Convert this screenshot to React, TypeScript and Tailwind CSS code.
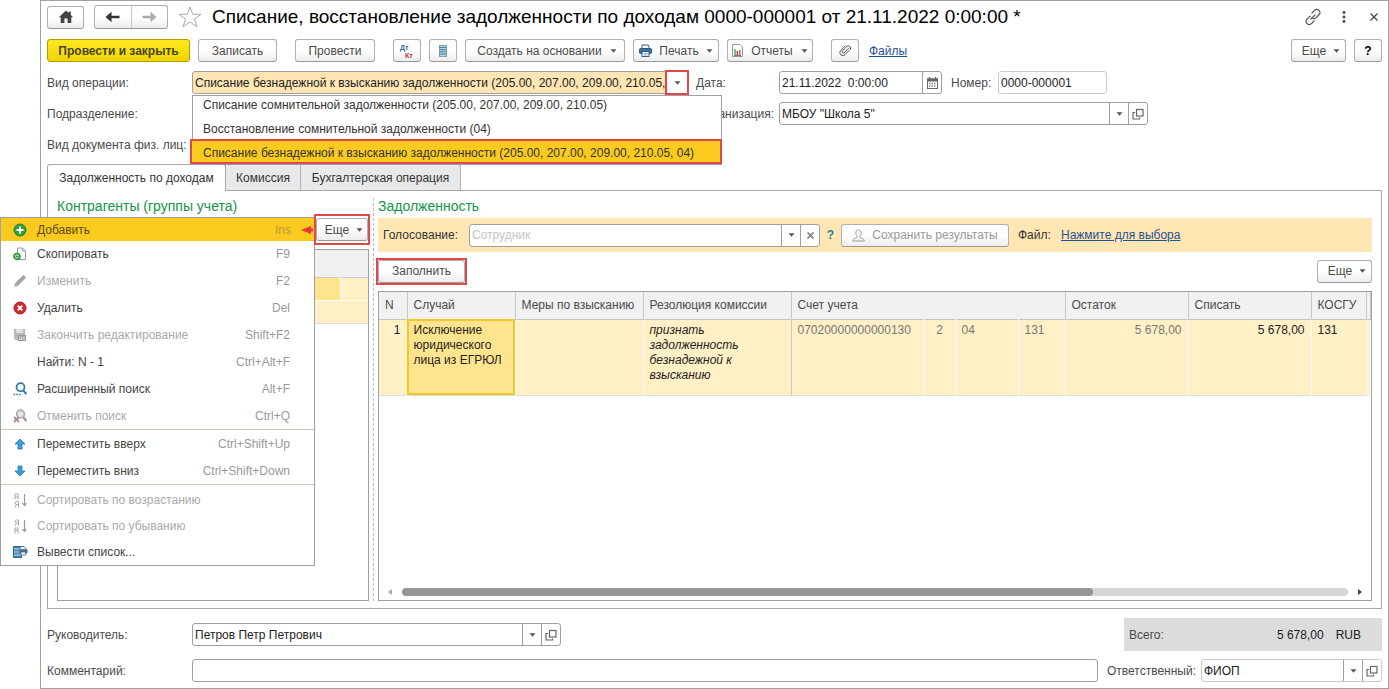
import { ReactNode } from "react";

interface MenuItem {
  label: string;
  keys?: string;
  icon?: ReactNode;
  disabled?: boolean;
}

const Caret = () => (
  <svg width="7" height="4" viewBox="0 0 7 4" className="shrink-0">
    <path d="M0.500 0.300h6L3.500 3.700z" fill="#555" />
  </svg>
);

const OpenIcon = () => (
  <svg width="12" height="12" viewBox="0 0 12 12" fill="none" stroke="#666">
    <rect x="4.500" y="1.500" width="6.500" height="6.500" strokeWidth="1.200" />
    <path d="M3 4.500H1v6.500h6.500V9.500" strokeWidth="1.200" />
  </svg>
);

const HomeIcon = () => (
  <svg width="16" height="14" viewBox="0 0 16 14">
    <path
      d="M8 0.500L0.800 7.300h1.900V13h3.700V8.500h3.200V13h3.700V7.300h1.900L12.800 4.900V1.500h-2v1.600z"
      fill="#444"
    />
  </svg>
);

const ArrowIcon = ({ flip, color }: { flip?: boolean; color: string }) => (
  <svg
    width="15"
    height="12"
    viewBox="0 0 15 12"
    className={flip ? "rotate-180" : ""}
  >
    <path d="M0.500 6L6.500 0.800V4.700H14.500v2.600H6.500v3.900z" fill={color} />
  </svg>
);

const StarIcon = () => (
  <svg width="24" height="22" viewBox="0 0 24 22">
    <path
      d="M12 1l2.700 7.300h8.300l-6.500 4.700 2.400 7.700L12 16l-6.900 4.700L7.500 13 1 8.300h8.300z"
      fill="#fff"
      stroke="#aaa"
    />
  </svg>
);

const LinkIcon = () => (
  <svg
    width="18"
    height="18"
    viewBox="0 0 18 18"
    fill="none"
    stroke="#555"
    strokeWidth="1.200"
    strokeLinecap="round"
  >
    <path d="M8 5l2.600-2.600a3 3 0 0 1 4.400 0a3 3 0 0 1 0 4.400L12 9.800a3 3 0 0 1-3 .7" />
    <path d="M10 13l-2.600 2.600a3 3 0 0 1-4.400 0a3 3 0 0 1 0-4.400L6 8.200" />
    <path d="M7 11l4-4" />
  </svg>
);

const ListIcon = () => (
  <svg width="8" height="12" viewBox="0 0 8 12">
    <rect x="0.500" y="0.500" width="7" height="11" fill="#b9d3e3" stroke="#7fa3bb" />
    <path d="M0.500 2.500h7M0.500 4.700h7M0.500 6.900h7M0.500 9.100h7" stroke="#4c7d9e" />
  </svg>
);

const PrinterIcon = () => (
  <svg width="13" height="13" viewBox="0 0 13 13">
    <path d="M3 5V1h6l1 1v3" fill="#fff" stroke="#2f5f85" />
    <rect x="0.500" y="4.500" width="12" height="5" rx="1" fill="#3f7099" stroke="#2b587c" />
    <rect x="3" y="7.500" width="7" height="5" fill="#fff" stroke="#2f5f85" />
    <path d="M4.500 9.500h4M4.500 11h4" stroke="#7a9cb5" strokeWidth="0.800" />
  </svg>
);

const ReportIcon = () => (
  <svg width="11" height="13" viewBox="0 0 11 13">
    <path d="M0.500 0.500h7.500l2.500 2.500v9.500H0.500z" fill="#fff" stroke="#999" />
    <path d="M3 5v6" stroke="#3c9a55" strokeWidth="1.300" />
    <path d="M5.300 7v4" stroke="#d2413a" strokeWidth="1.500" />
    <path d="M7.800 6v5" stroke="#d2413a" strokeWidth="1.300" />
    <path d="M2 11.500h7" stroke="#777" />
  </svg>
);

const ClipIcon = () => (
  <svg width="13" height="13" viewBox="0 0 13 13" fill="none" stroke="#555" strokeLinecap="round">
    <path d="M9.500 4.500L5 9a1.300 1.300 0 0 1-1.800-1.800L8 2.400a2.200 2.200 0 0 1 3.100 3.100L6 10.700a3 3 0 0 1-4.300-4.300L6.500 1.700" />
  </svg>
);

const CalendarIcon = () => (
  <svg width="11" height="12" viewBox="0 0 11 12">
    <rect x="0.500" y="2" width="10" height="9.500" fill="#fff" stroke="#666" />
    <path d="M0 1.500h11v3H0z" fill="#666" />
    <path d="M2.500 0v3M8.500 0v3" stroke="#666" strokeWidth="1.400" />
    <path d="M2 6.500h7.500M2 9h7.500" stroke="#888" strokeWidth="1.300" strokeDasharray="1.500 1" />
  </svg>
);

const UserIcon = () => (
  <svg width="13" height="13" viewBox="0 0 13 13" fill="none" stroke="#999">
    <path d="M6.500 1c-2 0-2.700 1.300-2.700 3s.8 2.500 1.400 3.200c0 1.300-.7 1.600-2 2C1.700 9.700.8 10.300.8 12h11.400c0-1.700-.9-2.300-2.400-2.800-1.300-.4-2-.7-2-2C8.400 6.500 9.200 5.700 9.200 4S8.500 1 6.500 1z" />
  </svg>
);

const AddIcon = () => (
  <svg width="14" height="14" viewBox="0 0 14 14">
    <circle cx="7" cy="7" r="6" fill="#2fa03c" stroke="#1d7f2b" />
    <path d="M7 3.500v7M3.500 7h7" stroke="#fff" strokeWidth="2" />
  </svg>
);

const CopyIcon = () => (
  <svg width="14" height="14" viewBox="0 0 14 14">
    <path d="M4.500 1h5l3 3v8.500h-8z" fill="#fff" stroke="#9aa0a8" />
    <path d="M9.500 1v3h3" fill="none" stroke="#9aa0a8" />
    <circle cx="4" cy="9.500" r="2.800" fill="#fff" stroke="#27953a" strokeWidth="1.800" />
    <path d="M4 8v3M2.500 9.500h3" stroke="#27953a" />
  </svg>
);

const PencilIcon = () => (
  <svg width="14" height="14" viewBox="0 0 14 14">
    <path d="M1 13l1.200-4L9.500 1.700a1.500 1.500 0 0 1 2 0l.8.800a1.500 1.500 0 0 1 0 2L5 11.800z" fill="#a3a9a3" />
  </svg>
);

const DeleteIcon = () => (
  <svg width="14" height="14" viewBox="0 0 14 14">
    <circle cx="7" cy="7" r="6" fill="#cf2a2f" stroke="#a91d22" />
    <path d="M4.700 4.700l4.600 4.600M9.300 4.700L4.700 9.300" stroke="#fff" strokeWidth="1.800" />
  </svg>
);

const FinishIcon = () => (
  <svg width="14" height="14" viewBox="0 0 14 14">
    <path d="M1 1h11v11H2.500L1 10.500z" fill="#b9b9b9" />
    <path d="M3 1h7v4H3z" fill="#dedede" />
    <path d="M5 7h8v6H5z" fill="#9b9b9b" />
    <path d="M6.500 9h2v2.500h-2zM10 8.500V12M12 8.500l-1.500 1.700L12 12" fill="none" stroke="#e6e6e6" strokeWidth="0.800" />
  </svg>
);

const SearchIcon = () => (
  <svg width="14" height="14" viewBox="0 0 14 14" fill="none">
    <circle cx="7.500" cy="5.200" r="4" stroke="#2f79ae" strokeWidth="1.700" />
    <path d="M10.300 8.300l3 3.700" stroke="#2f79ae" strokeWidth="2" />
    <path d="M0.500 12.500h7.500" stroke="#2f79ae" strokeWidth="1.600" strokeDasharray="1.600 1.200" />
  </svg>
);

const CancelSearchIcon = () => (
  <svg width="14" height="14" viewBox="0 0 14 14" fill="none">
    <circle cx="7.500" cy="5" r="3.900" fill="#e6e6e6" stroke="#aaa" strokeWidth="1.600" />
    <path d="M10.300 8.300l3 3.700" stroke="#999" strokeWidth="2.200" />
    <path d="M1 8l5 5M6 8l-5 5" stroke="#a88f8a" strokeWidth="1.800" />
  </svg>
);

const MoveIcon = ({ down }: { down?: boolean }) => (
  <svg width="14" height="12" viewBox="0 0 14 12" className={down ? "rotate-180" : ""}>
    <path d="M7 1l5 5H9v5H5V6H2z" fill="#39a0dc" stroke="#2379b3" strokeWidth="0.800" />
  </svg>
);

const SortIcon = ({ desc }: { desc?: boolean }) => (
  <svg width="14" height="15" viewBox="0 0 14 15" fill="none" stroke="#aaa">
    <path
      d={
        desc
          ? "M5.500 7V1H3.500a1.500 1.500 0 0 0 0 3h2M3.500 4L2 7M2 14.500V9h3v5.500M2 11.500h3"
          : "M2 6.500V1h3v5.500M2 4h3M5.500 14.500V8.500H3.500a1.500 1.500 0 0 0 0 3h2M3.500 11.500L2 14.500"
      }
    />
    <path d="M11.500 1v11M9.500 10l2 2.500 2-2.500" stroke="#999" strokeWidth="1.200" />
  </svg>
);

const OutputIcon = () => (
  <svg width="15" height="14" viewBox="0 0 15 14">
    <path d="M0.500 1.500h8v11h-8z" fill="#4d88b8" stroke="#2d6391" />
    <path d="M1 4h7M1 7h7M1 10h7" stroke="#c9dfef" strokeWidth="0.900" />
    <path d="M7 1.500h4l2 2V5H7z" fill="#e6eef5" stroke="#4a6f90" />
    <rect x="6.500" y="4.500" width="8" height="4" rx="1" fill="#47698a" />
    <rect x="8" y="7" width="4.500" height="3" fill="#fff" stroke="#47698a" strokeWidth="0.800" />
  </svg>
);

const editItems: MenuItem[] = [
  { label: "Скопировать", keys: "F9", icon: <CopyIcon /> },
  { label: "Изменить", keys: "F2", icon: <PencilIcon />, disabled: true },
  { label: "Удалить", keys: "Del", icon: <DeleteIcon /> },
  {
    label: "Закончить редактирование",
    keys: "Shift+F2",
    icon: <FinishIcon />,
    disabled: true,
  },
  { label: "Найти: N - 1", keys: "Ctrl+Alt+F" },
  { label: "Расширенный поиск", keys: "Alt+F", icon: <SearchIcon /> },
  {
    label: "Отменить поиск",
    keys: "Ctrl+Q",
    icon: <CancelSearchIcon />,
    disabled: true,
  },
];

const moveItems: MenuItem[] = [
  { label: "Переместить вверх", keys: "Ctrl+Shift+Up", icon: <MoveIcon /> },
  { label: "Переместить вниз", keys: "Ctrl+Shift+Down", icon: <MoveIcon down /> },
];

const sortItems: MenuItem[] = [
  { label: "Сортировать по возрастанию", icon: <SortIcon />, disabled: true },
  { label: "Сортировать по убыванию", icon: <SortIcon desc />, disabled: true },
  { label: "Вывести список...", icon: <OutputIcon /> },
];

const operations = [
  "Списание сомнительной задолженности (205.00, 207.00, 209.00, 210.05)",
  "Восстановление сомнительной задолженности (04)",
  "Списание безнадежной к взысканию задолженности (205.00, 207.00, 209.00, 210.05, 04)",
];

function Button({
  children,
  className = "",
  label,
}: {
  children: ReactNode;
  className?: string;
  label?: string;
}) {
  return (
    <button
      type="button"
      aria-label={label}
      className={`flex h-[23px] shrink-0 items-center justify-center rounded-[3px] border border-[#b0b0b0] border-b-[#999] bg-linear-to-b from-white from-50% to-[#ececec] whitespace-nowrap ${className}`}
    >
      {children}
    </button>
  );
}

function FieldButton({ children, label }: { children: ReactNode; label: string }) {
  return (
    <button
      type="button"
      aria-label={label}
      className="flex w-[19px] shrink-0 items-center justify-center border-l border-[#a0a0a0]"
    >
      {children}
    </button>
  );
}

function SelectField({
  id,
  value,
  className,
}: {
  id: string;
  value: string;
  className: string;
}) {
  return (
    <div className={`flex h-[23px] rounded-[3px] border bg-white ${className}`}>
      <select
        id={id}
        defaultValue={value}
        className="min-w-0 flex-1 appearance-none bg-transparent px-[2px] text-[#222] outline-none"
      >
        <option>{value}</option>
      </select>
      <FieldButton label="Выбрать">
        <Caret />
      </FieldButton>
      <FieldButton label="Открыть">
        <OpenIcon />
      </FieldButton>
    </div>
  );
}

function MenuRow({ item }: { item: MenuItem }) {
  return (
    <button
      type="button"
      role="menuitem"
      disabled={item.disabled}
      className={`flex items-center pr-6 pl-3 text-left ${
        item.disabled ? "text-[#aaa]" : "text-[#444]"
      }`}
    >
      <span className="flex w-6 shrink-0">{item.icon}</span>
      <span className="flex-1">{item.label}</span>
      <span className="text-[#999]">{item.keys}</span>
    </button>
  );
}

function ContextMenu() {
  return (
    <div
      role="menu"
      className="absolute top-[217px] left-0 z-20 w-[315px] border border-[#a0a0a0] bg-white"
    >
      <button
        type="button"
        role="menuitem"
        className="flex h-[23px] w-full items-center bg-[#fbca1f] pl-3 text-left text-[#5a4a10]"
      >
        <span className="flex w-6 shrink-0">
          <AddIcon />
        </span>
        <span className="flex-1">Добавить</span>
        <span className="text-[#b39a3c]">Ins</span>
        <svg width="12" height="10" viewBox="0 0 12 10" className="mr-px ml-[10px]">
          <path d="M0 5l10-4v8zM9 3.500h3v3H9z" fill="#ee3338" />
        </svg>
      </button>
      <div className="grid h-[188px] auto-rows-fr">
        {editItems.map((item) => (
          <MenuRow key={item.label} item={item} />
        ))}
      </div>
      <div className="grid h-[55px] auto-rows-fr border-t border-[#c9c9b4]">
        {moveItems.map((item) => (
          <MenuRow key={item.label} item={item} />
        ))}
      </div>
      <div className="grid h-[81px] auto-rows-fr border-t border-[#c9c9b4] pt-[2px]">
        {sortItems.map((item) => (
          <MenuRow key={item.label} item={item} />
        ))}
      </div>
    </div>
  );
}

function TitleBar() {
  return (
    <div className="flex h-6 items-center">
      <Button className="h-6 w-[37px]" label="Домой">
        <HomeIcon />
      </Button>
      <div className="ml-[10px] flex h-6 w-[74px] rounded-[3px] border border-[#b0b0b0] border-b-[#999] bg-linear-to-b from-white from-50% to-[#ececec]">
        <button
          type="button"
          aria-label="Назад"
          className="flex flex-1 items-center justify-center border-r border-[#c8c8c8]"
        >
          <ArrowIcon color="#333" />
        </button>
        <button
          type="button"
          aria-label="Вперед"
          className="flex flex-1 items-center justify-center"
        >
          <ArrowIcon color="#aaa" flip />
        </button>
      </div>
      <button type="button" aria-label="В избранное" className="ml-[10px]">
        <StarIcon />
      </button>
      <h1 className="ml-[10px] text-[19px] whitespace-nowrap text-black">
        Списание, восстановление задолженности по доходам 0000-000001 от
        21.11.2022 0:00:00 *
      </h1>
      <div className="ml-auto flex items-center gap-5 pr-1">
        <button type="button" aria-label="Ссылка">
          <LinkIcon />
        </button>
        <button type="button" aria-label="Меню">
          <svg width="4" height="12" viewBox="0 0 4 12" fill="#444">
            <circle cx="2" cy="1.500" r="1.400" />
            <circle cx="2" cy="6" r="1.400" />
            <circle cx="2" cy="10.500" r="1.400" />
          </svg>
        </button>
        <button type="button" aria-label="Закрыть" className="ml-1">
          <svg width="8" height="8" viewBox="0 0 8 8" stroke="#444" strokeWidth="1.200">
            <path d="M0.500 0.500l7 7M7.500 0.500l-7 7" />
          </svg>
        </button>
      </div>
    </div>
  );
}

function Toolbar() {
  return (
    <div className="mt-[10px] flex items-center">
      <button
        type="button"
        className="h-[23px] w-[143px] rounded-[3px] border border-[#b39c00] bg-linear-to-b from-[#ffe81f] to-[#f0d400] font-bold text-[#4a4420]"
      >
        Провести и закрыть
      </button>
      <Button className="ml-2 w-[79px]">Записать</Button>
      <Button className="ml-[18px] w-[80px]">Провести</Button>
      <div className="ml-[18px] flex gap-2">
        <Button className="w-7" label="Дт/Кт">
          <svg width="16" height="16" viewBox="0 0 16 16" className="font-bold">
            <text x="1" y="7" fontSize="7" fill="#2d6ca2">Дт</text>
            <text x="6" y="15" fontSize="7" fill="#c5302b">Кт</text>
          </svg>
        </Button>
        <Button className="w-7" label="Список">
          <ListIcon />
        </Button>
        <Button className="w-[160px] gap-2 pl-1">
          Создать на основании <Caret />
        </Button>
        <Button className="w-[86px] gap-[7px]">
          <PrinterIcon />
          Печать <Caret />
        </Button>
        <Button className="w-[86px] gap-2">
          <ReportIcon />
          Отчеты <Caret />
        </Button>
      </div>
      <Button className="ml-[18px] w-7" label="Прикрепить">
        <ClipIcon />
      </Button>
      <a href="#files" className="ml-[10px] text-[#1f5199] underline">
        Файлы
      </a>
      <div className="ml-auto flex gap-2">
        <Button className="w-[55px] gap-[7px] pl-[5px]">
          Еще <Caret />
        </Button>
        <Button className="w-7 font-bold text-black">?</Button>
      </div>
    </div>
  );
}

function OperationField() {
  return (
    <div className="relative flex h-[23px] w-[496px] rounded-[3px] border border-[#a0a0a0] bg-[#fde6b4]">
      <select
        id="operation"
        defaultValue={operations[2]}
        className="min-w-0 flex-1 appearance-none overflow-hidden bg-transparent pl-[2px] text-[#222] outline-none"
      >
        {operations.map((name) => (
          <option key={name}>{name}</option>
        ))}
      </select>
      <button
        type="button"
        aria-label="Выбрать"
        className="flex w-5 shrink-0 items-center justify-center bg-white outline-2 outline-[#e0484c]"
      >
        <Caret />
      </button>
      <ul className="absolute top-[23px] -left-px z-10 w-[530px] border border-[#a0a0a0] bg-white whitespace-nowrap text-[#333]">
        <li className="flex h-[18px] items-center pl-[10px]">{operations[0]}</li>
        <li className="flex h-[25px] items-end pb-[2px] pl-[10px]">{operations[1]}</li>
        <li className="-mr-px -ml-[3px] flex h-[25px] items-center border-2 border-[#e0484c] bg-[#fbca1f] pt-[3px] pl-[11px]">
          {operations[2]}
        </li>
      </ul>
    </div>
  );
}

function Header() {
  return (
    <div className="mt-[9px] flex gap-2">
      <div className="grid grid-cols-[145px_496px] items-center gap-y-2">
        <label htmlFor="operation">Вид операции:</label>
        <OperationField />
        <label htmlFor="division">Подразделение:</label>
        <input
          id="division"
          className="h-[23px] rounded-[3px] border border-[#a0a0a0]"
        />
        <label htmlFor="doctype" className="whitespace-nowrap">
          Вид документа физ. лиц:
        </label>
        <input
          id="doctype"
          className="h-[23px] rounded-[3px] border border-[#a0a0a0]"
        />
      </div>
      <div className="grid auto-rows-[23px] grid-cols-[83px_auto] items-center gap-y-2">
        <label htmlFor="date">Дата:</label>
        <div className="flex items-center">
          <div className="flex h-[23px] w-[163px] rounded-[3px] border border-[#a0a0a0]">
            <input
              id="date"
              defaultValue="21.11.2022&nbsp; 0:00:00"
              className="min-w-0 flex-1 pl-[2px] text-[#222] outline-none"
            />
            <FieldButton label="Календарь">
              <CalendarIcon />
            </FieldButton>
          </div>
          <label htmlFor="number" className="w-[56px] pl-[9px]">
            Номер:
          </label>
          <input
            id="number"
            defaultValue="0000-000001"
            className="h-[23px] w-[109px] rounded-[3px] border border-[#ccc] pl-[2px] text-[#222]"
          />
        </div>
        <label htmlFor="org" className="pr-[5px] text-right">
          Организация:
        </label>
        <SelectField
          id="org"
          value='МБОУ "Школа 5"'
          className="w-[369px] border-[#a0a0a0]"
        />
      </div>
    </div>
  );
}

function GroupList() {
  return (
    <section className="flex w-[312px] shrink-0 flex-col">
      <h2 className="h-6 text-[14px] leading-6 text-[#149447]">
        Контрагенты (группы учета)
      </h2>
      <div className="flex h-[23px] justify-end">
        <div className="relative z-30 -my-1 -mr-px border-2 border-[#e0484c] bg-white py-[2px]">
          <Button className="w-[52px] gap-[7px] pl-1">
            Еще <Caret />
          </Button>
        </div>
      </div>
      <div className="mt-2 flex-1 border border-[#a0a0a0]">
        <table className="w-full table-fixed border-collapse">
          <thead>
            <tr className="h-[27px] border-b border-[#ccc] bg-[#f1f1f1]">
              <th />
              <th className="w-7" />
            </tr>
          </thead>
          <tbody>
            <tr className="h-[23px] border-b border-white">
              <td className="border-r border-white bg-[#fee48e]" />
              <td className="bg-[#fff0c6]" />
            </tr>
            <tr className="h-[23px] border-b border-[#ddd] bg-[#fff0c6]">
              <td />
              <td />
            </tr>
          </tbody>
        </table>
      </div>
    </section>
  );
}

function DebtTable() {
  return (
    <table className="w-full table-fixed border-collapse text-left">
      <colgroup>
        <col className="w-7" />
        <col className="w-[108px]" />
        <col className="w-[128px]" />
        <col className="w-[148px]" />
        <col className="w-[133px]" />
        <col className="w-[31px]" />
        <col className="w-[63px]" />
        <col className="w-[47px]" />
        <col className="w-[123px]" />
        <col className="w-[123px]" />
        <col className="w-[55px]" />
        <col />
      </colgroup>
      <thead>
        <tr className="h-[27px] border-b border-[#c4c4c4] bg-[#f1f1f1] whitespace-nowrap *:border-r *:border-[#c8c8c8] *:px-[6px] *:font-normal">
          <th>N</th>
          <th>Случай</th>
          <th>Меры по взысканию</th>
          <th>Резолюция комиссии</th>
          <th colSpan={4}>Счет учета</th>
          <th>Остаток</th>
          <th>Списать</th>
          <th>КОСГУ</th>
          <th className="border-r-0" />
        </tr>
      </thead>
      <tbody>
        <tr className="h-[76px] border-b border-[#ddd] bg-[#fff0c6] align-top leading-[15px] text-[#222] *:border-r *:border-white *:px-[6px] *:py-[3px]">
          <td className="text-right">1</td>
          <td className="bg-[#fee48e] outline-2 -outline-offset-2 outline-[#f0c828]">
            Исключение юридического лица из ЕГРЮЛ
          </td>
          <td />
          <td className="border-r-[#c8c8c8]! italic">
            признать задолженность безнадежной к взысканию
          </td>
          <td className="text-[#777]">07020000000000130</td>
          <td className="text-center text-[#777]">2</td>
          <td className="text-[#777]">04</td>
          <td className="text-[#777]">131</td>
          <td className="text-right text-[#777]">5 678,00</td>
          <td className="text-right">5 678,00</td>
          <td>131</td>
          <td className="border-r-0" />
        </tr>
      </tbody>
    </table>
  );
}

function DebtPanel() {
  return (
    <section className="flex min-w-0 flex-1 flex-col">
      <h2 className="h-6 text-[14px] leading-6 text-[#149447]">Задолженность</h2>
      <div className="flex h-[34px] items-center bg-[#ffe6b3] pl-[5px] text-[#333]">
        <label htmlFor="voter" className="w-[86px] shrink-0">
          Голосование:
        </label>
        <div className="flex h-[23px] w-[351px] rounded-[3px] border border-[#a0a0a0] bg-white">
          <input
            id="voter"
            placeholder="Сотрудник"
            className="min-w-0 flex-1 pl-[2px] outline-none placeholder:text-[#c4c4c4]"
          />
          <FieldButton label="Выбрать">
            <Caret />
          </FieldButton>
          <FieldButton label="Очистить">
            <svg width="7" height="7" viewBox="0 0 7 7" stroke="#888" strokeWidth="1.800">
              <path d="M0.500 0.500l6 6M6.500 0.500l-6 6" />
            </svg>
          </FieldButton>
        </div>
        <button type="button" className="w-[21px] font-bold text-[#1d7f96]">
          ?
        </button>
        <Button className="w-[168px] gap-[7px] text-[#999]">
          <UserIcon />
          Сохранить результаты
        </Button>
        <span className="ml-[9px] w-[43px]">Файл:</span>
        <a href="#select" className="whitespace-nowrap text-[#1f5199] underline">
          Нажмите для выбора
        </a>
      </div>
      <div className="mt-[7px] flex h-6 items-center justify-between">
        <div className="-my-px -ml-[2px] border-2 border-[#e0484c]">
          <Button className="w-[87px]">Заполнить</Button>
        </div>
        <Button className="w-[55px] gap-[7px] pl-[5px]">
          Еще <Caret />
        </Button>
      </div>
      <div className="mt-2 flex flex-1 flex-col justify-between overflow-hidden border border-[#a0a0a0]">
        <DebtTable />
        <div className="flex h-4 items-center gap-[10px] px-[9px]">
          <svg width="4" height="6" viewBox="0 0 4 6">
            <path d="M4 0v6L0 3z" fill="#aaa" />
          </svg>
          <div className="h-2 flex-1 rounded-full bg-[#d6d6d6]">
            <div className="h-2 w-[73%] rounded-full bg-[#969696]" />
          </div>
          <svg width="4" height="6" viewBox="0 0 4 6">
            <path d="M0 0v6l4-3z" fill="#444" />
          </svg>
        </div>
      </div>
    </section>
  );
}

function Tabs() {
  return (
    <>
      <div role="tablist" className="mt-2 flex h-[26px] text-[#333]">
        <button
          type="button"
          role="tab"
          aria-selected="true"
          className="relative -mb-px w-[179px] rounded-t-[3px] border border-b-0 border-[#a8a8a8] bg-white"
        >
          Задолженность по доходам
        </button>
        <button
          type="button"
          role="tab"
          className="w-[75px] border-t border-r border-[#b0b0b0] bg-[#e9e9e9]"
        >
          Комиссия
        </button>
        <button
          type="button"
          role="tab"
          className="w-[160px] rounded-tr-[3px] border-t border-r border-[#b0b0b0] bg-[#e9e9e9]"
        >
          Бухгалтерская операция
        </button>
      </div>
      <div className="flex flex-1 gap-1 border border-[#a8a8a8] px-[9px] pt-[3px] pb-[7px]">
        <GroupList />
        <div className="mt-1 border-l border-dashed border-[#bbb]" />
        <DebtPanel />
      </div>
    </>
  );
}

function Footer() {
  return (
    <>
      <div className="mt-[9px] flex items-center">
        <label htmlFor="head" className="w-[145px]">
          Руководитель:
        </label>
        <SelectField
          id="head"
          value="Петров Петр Петрович"
          className="w-[369px] border-[#a0a0a0]"
        />
        <div className="ml-auto flex h-[33px] w-[258px] items-center bg-[#dcdcdc] pr-[21px] pl-[5px]">
          <span className="flex-1">Всего:</span>
          <span className="text-[#222]">5 678,00</span>
          <span className="ml-3 text-[#222]">RUB</span>
        </div>
      </div>
      <div className="mt-2 flex items-center">
        <label htmlFor="comment" className="w-[145px]">
          Комментарий:
        </label>
        <input
          id="comment"
          className="h-[23px] flex-1 rounded-[3px] border border-[#a0a0a0]"
        />
        <label htmlFor="responsible" className="w-[103px] pl-[9px]">
          Ответственный:
        </label>
        <SelectField
          id="responsible"
          value="ФИОП"
          className="w-[181px] border-[#ccc]"
        />
      </div>
    </>
  );
}

export default function App() {
  return (
    <div className="relative flex min-h-screen bg-white pl-10 font-['Liberation_Sans',Arial,sans-serif] text-[12px] leading-4 text-[#4a4a4a]">
      <main className="flex min-w-0 flex-1 flex-col border border-[#a0a0a0] px-[6px] pt-1 pb-[6px]">
        <TitleBar />
        <Toolbar />
        <Header />
        <Tabs />
        <Footer />
      </main>
      <ContextMenu />
    </div>
  );
}
